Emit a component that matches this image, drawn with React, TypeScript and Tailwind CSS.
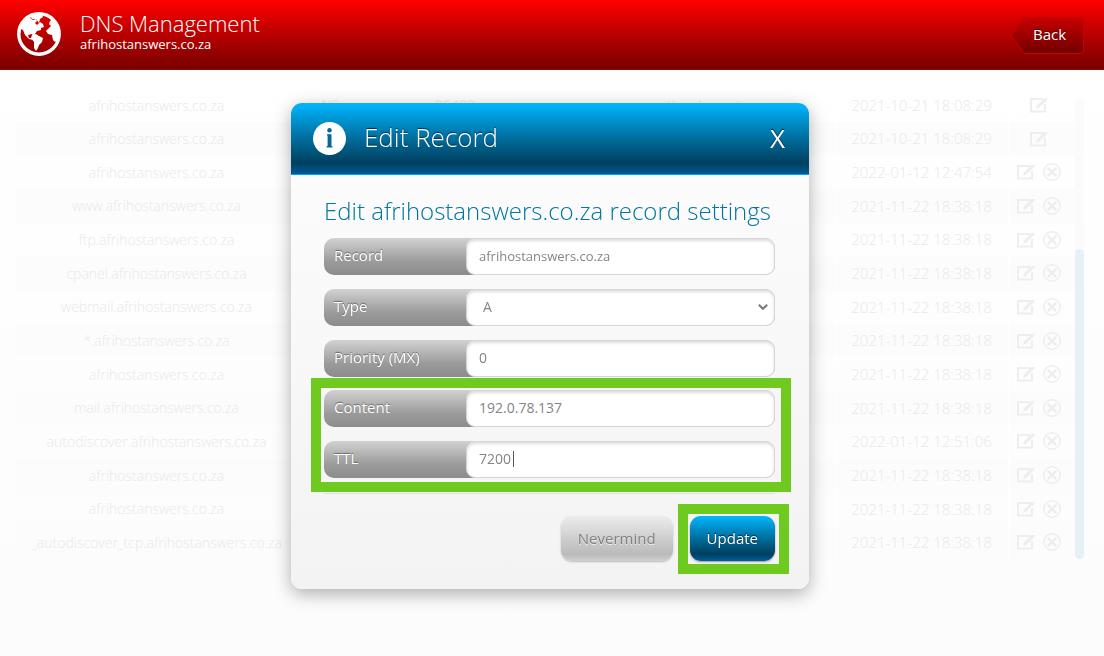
import React from "react";

type Row = { name: string; date: string; removable: boolean; type?: string; ttl?: string; content?: string };

const DATE = "2021-11-22 18:38:18";

const rows: Row[] = [
  { name: "afrihostanswers.co.za", type: "NS", ttl: "86400", content: "ns.otherdns.net", date: "2021-10-21 18:08:29", removable: false },
  { name: "afrihostanswers.co.za", date: "2021-10-21 18:08:29", removable: false },
  { name: "afrihostanswers.co.za", date: "2022-01-12 12:47:54", removable: true },
  { name: "www.afrihostanswers.co.za", date: DATE, removable: true },
  { name: "ftp.afrihostanswers.co.za", date: DATE, removable: true },
  { name: "cpanel.afrihostanswers.co.za", date: DATE, removable: true },
  { name: "webmail.afrihostanswers.co.za", date: DATE, removable: true },
  { name: "*.afrihostanswers.co.za", date: DATE, removable: true },
  { name: "afrihostanswers.co.za", date: DATE, removable: true },
  { name: "mail.afrihostanswers.co.za", date: DATE, removable: true },
  { name: "autodiscover.afrihostanswers.co.za", date: "2022-01-12 12:51:06", removable: true },
  { name: "afrihostanswers.co.za", date: DATE, removable: true },
  { name: "afrihostanswers.co.za", date: DATE, removable: true },
  { name: "_autodiscover_tcp.afrihostanswers.co.za", date: DATE, removable: true },
];

function GlobeIcon() {
  return (
    <svg viewBox="0 0 44 44" className="mb-0.5 size-11 shrink-0" aria-hidden="true">
      <circle cx="22" cy="22" r="20.2" fill="none" stroke="#fff" strokeWidth="3.400" />
      <path fill="#fff" d="M4 12 9 6l4 0 3 2 3-1 1 2-2 2 2 2 3-3 3 2 1 3-3 1 0 2-4 1-2 3-2 2-1-2-4 1 1 3 3 0 1 2-4-1-4-4-2-5-4-2Z" />
      <path fill="#fff" d="m13 4 4-2 8 0 1 3-3 2-1 4-3-4-4 0Z" />
      <path fill="#fff" d="m15 23 4-1 3 2 4 2-1 4-3 3-1 3-2 3-2-3 0-6-3-4Z" />
      <path fill="#fff" d="m31 17 3-3-2-2 1-3 3-2 5 6 2 9-2 6-3 2-2-2-1-5-4-1-2-3Z" />
    </svg>
  );
}

function EditIcon() {
  return (
    <svg viewBox="0 0 18 16" className="h-4 w-[18px]" fill="none" aria-hidden="true">
      <path d="M13 2H1v12.500h14V7" stroke="currentColor" strokeWidth="2" />
      <path d="M6 12 7 8.500 14.500 1H18l-1 2-7.500 7.500Z" fill="currentColor" />
    </svg>
  );
}

function RemoveIcon() {
  return (
    <svg viewBox="0 0 18 18" className="size-[18px]" fill="none" stroke="currentColor" aria-hidden="true">
      <circle cx="9" cy="9" r="8.200" strokeWidth="1.500" />
      <path d="m4.800 4.800 8.400 8.400m0-8.400-8.400 8.400" strokeWidth="2.600" />
    </svg>
  );
}

function Records() {
  return (
    <main className="flex pt-[18px] pr-5 pl-4">
      <table className="grow table-fixed text-center text-[14px] font-light text-[#e9e9e9]">
        <colgroup>
          <col className="w-[281px]" />
          <col className="w-[66px]" />
          <col className="w-[184px]" />
          <col />
          <col className="w-[173px]" />
          <col className="w-[67px]" />
        </colgroup>
        <tbody>
          {rows.map((r, i) => (
            <tr key={i} className="odd:h-[34px] even:h-[33px] even:bg-[#fcfcfc]">
              <td className="p-0 whitespace-nowrap">{r.name}</td>
              <td className="p-0">{r.type}</td>
              <td className="p-0">{r.ttl}</td>
              <td className="p-0">{r.content}</td>
              <td className="border-l border-white p-0 text-[15px] whitespace-nowrap">{r.date}</td>
              <td className="border-l border-white p-0 pr-1.5">
                <div className="flex items-center justify-center gap-2 text-[#eeeeee]">
                  <button type="button" aria-label="Edit record"><EditIcon /></button>
                  {r.removable && <button type="button" aria-label="Delete record"><RemoveIcon /></button>}
                </div>
              </td>
            </tr>
          ))}
        </tbody>
      </table>
      <div className="mt-[10px] flex w-[9px] flex-col justify-end self-start rounded-full bg-[#fbfbfb] pt-[151px]">
        <div className="h-[310px] rounded-full bg-[#e4f1f7]" />
      </div>
    </main>
  );
}

function Field({ id, label, children }: { id: string; label: string; children: React.ReactNode }) {
  return (
    <div className="flex h-[37px] rounded-[10px] bg-linear-to-b from-[#d2d2d2] via-[#9a9a9a] via-65% to-[#8c8c8c]">
      <label htmlFor={id} className="w-[142px] shrink-0 pt-[5px] pl-[10px] text-[15px] leading-6 font-medium text-white [text-shadow:0_-1px_1px_#666]">
        {label}
      </label>
      {children}
    </div>
  );
}

const control =
  "h-full w-full min-w-0 appearance-none rounded-[9px] border border-[#d6d6d6] bg-white px-3 pb-0.5 text-[#858585] shadow-[inset_0_2px_3px_#ddd] outline-none";

export default function App() {
  return (
    <div className="min-h-screen bg-linear-to-b from-white to-[#fcfcfc] font-['Open_Sans','Noto_Sans',sans-serif]">
      <header className="flex h-[70px] items-center justify-between border-b border-[#a00000] bg-linear-to-b from-[#ff0000] to-[#780000] pr-5 pl-[17px] text-white">
        <div className="flex items-center gap-[19px]">
          <GlobeIcon />
          <div className="pb-2">
            <h1 className="text-[22px] leading-[26px] font-light">DNS Management</h1>
            <p className="text-[13px] leading-4">afrihostanswers.co.za</p>
          </div>
        </div>
        <button type="button" className="relative mt-0.5 h-[37px] w-[73px] pb-0.5 pl-1 text-[15px] font-medium [text-shadow:0_-1px_1px_#400]">
          <svg viewBox="0 0 73 37" className="absolute inset-0 size-full" aria-hidden="true">
            <defs>
              <linearGradient id="back-fill" x1="0" y1="0" x2="0" y2="1">
                <stop offset="0" stopColor="#c80000" />
                <stop offset="1" stopColor="#700000" />
              </linearGradient>
            </defs>
            <path d="M13 .5h55q4.500 0 4.500 4.500v27q0 4.500-4.500 4.500H13L.5 18.500Z" fill="url(#back-fill)" stroke="#c80000" />
          </svg>
          <span className="relative">Back</span>
        </button>
      </header>

      <Records />

      <div className="fixed inset-0 flex items-start justify-center pt-[103px] pr-1">
        <section role="dialog" aria-labelledby="dialog-title" className="w-[518px] max-w-full overflow-hidden rounded-[11px] bg-linear-to-b from-[#fdfdfd] to-[#f3f3f3] shadow-[0_5px_18px_#00000050]">
          <div className="flex h-[72px] items-center border-b border-[#00a2f2] bg-linear-to-b from-[#00b7ff] via-[#003f5f] via-85% to-[#005c9a] pr-6 pl-[22px] text-white">
            <svg viewBox="0 0 33 33" className="size-[33px]" aria-hidden="true">
              <circle cx="16.500" cy="16.500" r="16.500" fill="#fff" />
              <circle cx="16.500" cy="8.300" r="2.200" fill="#006b98" />
              <path d="M14 12.200h4.500v11.800h.8v1.500h-5.600v-1.500h.9V13.600H14Z" fill="#006b98" />
            </svg>
            <h2 id="dialog-title" className="grow pb-0.5 pl-[18px] text-[26px] font-light [text-shadow:0_-1px_1px_#003048]">Edit Record</h2>
            <button type="button" aria-label="Close" className="text-[26px] font-medium [text-shadow:0_-1px_1px_#002030]">X</button>
          </div>

          <form className="pt-5 pr-[34px] pb-7 pl-[33px]" onSubmit={(e) => e.preventDefault()}>
            <h3 className="text-[24px] leading-8 font-light whitespace-nowrap text-[#00759f]">Edit afrihostanswers.co.za record settings</h3>
            <div className="mt-[11px] flex flex-col gap-[14px]">
              <Field id="record" label="Record">
                <input id="record" className={control + " text-[13px]"} defaultValue="afrihostanswers.co.za" />
              </Field>
              <Field id="type" label="Type">
                <div className="relative grow">
                  <select id="type" className={control + " pl-4 text-[14px]"} defaultValue="A">
                    <option>A</option>
                  </select>
                  <svg viewBox="0 0 10 6" className="pointer-events-none absolute top-[15px] right-[7px] h-1.5 w-[10px]" fill="none" stroke="#777" strokeWidth="2" aria-hidden="true">
                    <path d="m.8.800 4.200 4 4.200-4" />
                  </svg>
                </div>
              </Field>
              <Field id="priority" label="Priority (MX)">
                <input id="priority" className={control + " text-[14px]"} defaultValue="0" />
              </Field>
              <div className="relative -mt-px flex flex-col gap-[14px]">
                <Field id="content" label="Content">
                  <input id="content" className={control + " text-[14px]"} defaultValue="192.0.78.137" />
                </Field>
                <Field id="ttl" label="TTL">
                  <div className="relative grow">
                    <input id="ttl" className={control + " text-[14px]"} defaultValue="7200" />
                    <span className="pointer-events-none absolute top-[10px] left-[47px] h-4 w-px bg-[#555]" />
                  </div>
                </Field>
                <div className="pointer-events-none absolute -top-3 -right-4 -bottom-[14px] -left-[13px] border-10 border-[#6fca1f]" />
              </div>
            </div>
            <hr className="mt-[15px] border-[#e0e0e0]" />
            <div className="mt-[22px] flex justify-end gap-[17px] text-[15px]">
              <button type="button" className="h-[45px] rounded-[11px] bg-linear-to-b from-[#ececec] via-[#bababa] via-85% to-[#cfcfcf] px-[17px] text-[#808080] shadow-[0_1px_2px_#bbb] [text-shadow:0_1px_0_#eee]">
                Nevermind
              </button>
              <div className="relative">
                <button type="submit" className="h-[45px] rounded-[11px] bg-linear-to-b from-[#00b7ff] via-[#003f5f] via-85% to-[#005c9a] px-[17px] font-medium text-white shadow-[0_1px_2px_#999] [text-shadow:0_-1px_1px_#002030]">
                  Update
                </button>
                <div className="pointer-events-none absolute -top-3 -right-[14px] -bottom-[13px] -left-3 border-10 border-[#6fca1f]" />
              </div>
            </div>
          </form>
        </section>
      </div>
    </div>
  );
}
